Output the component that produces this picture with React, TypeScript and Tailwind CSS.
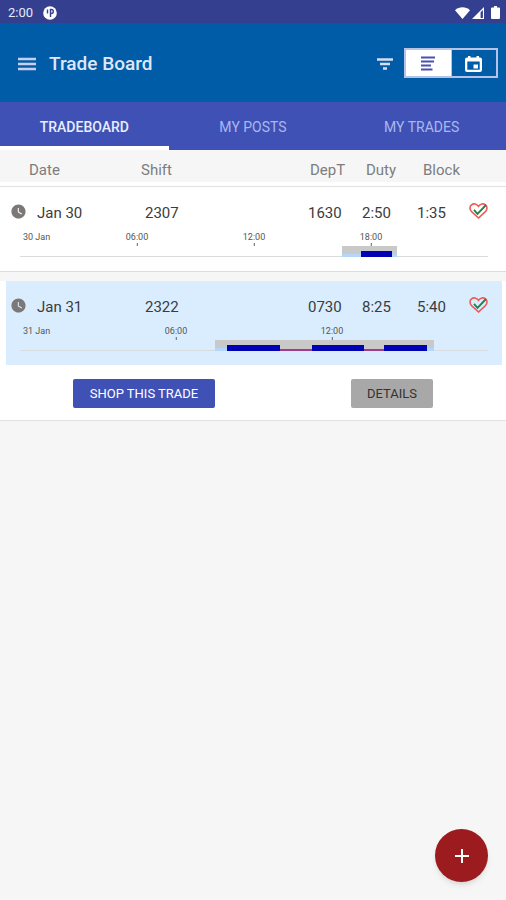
import { MdAdd, MdWatchLater } from "react-icons/md";

type Span = { from: number; to: number };

type Trade = {
  date: string;
  day: string;
  shift: string;
  dep: string;
  duty: string;
  block: string;
  hours: number;
  ticks: number[];
  dutySpan: Span;
  flights: Span[];
  selected?: boolean;
};

const trades: Trade[] = [
  {
    date: "Jan 30",
    day: "30 Jan",
    shift: "2307",
    dep: "1630",
    duty: "2:50",
    block: "1:35",
    hours: 24,
    ticks: [6, 12, 18],
    dutySpan: { from: 16.5, to: 19.33 },
    flights: [{ from: 17.5, to: 19.08 }],
  },
  {
    date: "Jan 31",
    day: "31 Jan",
    shift: "2322",
    dep: "0730",
    duty: "8:25",
    block: "5:40",
    hours: 18,
    ticks: [6, 12],
    dutySpan: { from: 7.5, to: 15.92 },
    flights: [
      { from: 7.97, to: 10 },
      { from: 11.24, to: 13.25 },
      { from: 14, to: 15.67 },
    ],
    selected: true,
  },
];

function StatusBar() {
  return (
    <div className="flex h-[23px] items-center bg-[#343f8f] pt-0.5 pr-1.5 pl-2 text-[#e8eafa]">
      <span className="text-[13px] leading-none">2:00</span>
      <svg className="ml-2.5 size-[14px]" viewBox="0 0 14 14" aria-hidden="true">
        <circle cx="7" cy="7" r="6.8" fill="#fff" />
        <path d="M4.5 3.5v4M7.5 11V3.5h.8a2 2 0 0 1 0 4h-.8" fill="none" stroke="#343f8f" strokeWidth="1.4" />
      </svg>
      <div className="ml-auto flex items-center gap-0.5">
        <svg className="h-3 w-[15px]" viewBox="0 0 15 12" aria-hidden="true">
          <path d="M0 3.2C4.2-.6 10.8-.6 15 3.2L7.5 12z" fill="#fff" />
        </svg>
        <svg className="h-3 w-[13px]" viewBox="0 0 13 12" aria-hidden="true">
          <path d="M0 12 12 0v12z" fill="#fff" />
          <path d="M8.6 5.2 10.9 3v8H8.6z" fill="#343f8f" />
        </svg>
        <svg className="ml-1 h-[13px] w-[9px]" viewBox="0 0 9 13" aria-hidden="true">
          <path d="M1 1.5h2V0h3v1.5h2a1 1 0 0 1 1 1V12a1 1 0 0 1-1 1H1a1 1 0 0 1-1-1V2.5a1 1 0 0 1 1-1z" fill="#fff" />
        </svg>
      </div>
    </div>
  );
}

function Toolbar() {
  return (
    <header className="flex h-[79px] items-center bg-[#005ca6] pr-2 pl-4 text-[#dfe6fa]">
      <button type="button" aria-label="Menu" className="pt-0.5 text-[#c9cdf0]">
        <svg className="h-[14px] w-[22px]" viewBox="0 0 22 14" aria-hidden="true">
          <path d="M2 2h18M2 7h18M2 12h18" stroke="currentColor" strokeWidth="2.6" />
        </svg>
      </button>
      <h1 className="ml-[11px] pt-0.5 text-[19px] leading-6 font-medium">Trade Board</h1>
      <button type="button" aria-label="Filter" className="mr-2.5 ml-auto pt-0.5 text-[#d5dcf5]">
        <svg className="h-3 w-[18px]" viewBox="0 0 18 12" aria-hidden="true">
          <path d="M1 1.5h16M4 6h10M7 10.500h4" stroke="currentColor" strokeWidth="2.4" />
        </svg>
      </button>
      <div className="flex h-[30px] w-[94px] border-2 border-[#b4c3e6]">
        <button type="button" aria-label="List view" className="flex flex-1 items-center justify-center bg-white pt-0.5">
          <svg className="h-[15px] w-4" viewBox="0 0 16 15" aria-hidden="true">
            <path d="M1 1.5h14M1 5.5h13M1 9.5h10M1 13.5h11.500" stroke="#4a50b0" strokeWidth="1.8" />
          </svg>
        </button>
        <button type="button" aria-label="Calendar view" className="flex flex-1 items-center justify-center border-l border-[#b4c3e6] pt-0.5 text-white">
          <svg className="h-4 w-[17px]" viewBox="0 0 17 16" fill="currentColor" aria-hidden="true">
            <path
              fillRule="evenodd"
              d="M3 0h2.500v1.500h6V0H14v1.500h1a2 2 0 0 1 2 2V14a2 2 0 0 1-2 2H2a2 2 0 0 1-2-2V3.500a2 2 0 0 1 2-2h1zM2.300 5.500v8.200h12.400V5.500z"
            />
            <path d="M8.500 8.500h4.500v4H8.500z" />
          </svg>
        </button>
      </div>
    </header>
  );
}

function Tabs() {
  return (
    <nav role="tablist" className="grid h-12 grid-cols-3 bg-[#3f51b5] text-sm text-[#a9b8f0]">
      <button type="button" role="tab" aria-selected="true" className="border-t-4 border-b-4 border-t-transparent border-b-white pt-0.5 font-medium text-[#e8ecff]">
        TRADEBOARD
      </button>
      <button type="button" role="tab" aria-selected="false" className="pt-0.5">
        MY POSTS
      </button>
      <button type="button" role="tab" aria-selected="false" className="pt-0.5">
        MY TRADES
      </button>
    </nav>
  );
}

function HeartCheck() {
  return (
    <svg className="h-4 w-[19px]" viewBox="0 0 19 16" fill="none" aria-hidden="true">
      <path
        d="M9.5 15 2.6 8.6C.4 6.4.6 3.2 2.5 1.8 4.7.2 7.8.8 9.500 3.400 11.2.8 14.3.2 16.5 1.8c1.9 1.4 2.1 4.6-.1 6.8z"
        stroke="#ee5a55"
        strokeWidth="1.6"
      />
      <path d="m5 6.8 3.500 4 8.500-8.800" stroke="#23804a" strokeWidth="1.8" />
    </svg>
  );
}

function Timeline({ trade }: { trade: Trade }) {
  const pct = (h: number) => `${(h / trade.hours) * 100}%`;
  const place = (s: Span) => ({ left: pct(s.from), width: pct(s.to - s.from) });
  const { dutySpan, flights } = trade;

  return (
    <div className="relative h-[26px] border-b border-[#d9dcdf] text-[9px] leading-3 text-[#555]">
      <span className="ml-[3px] block">{trade.day}</span>
      {trade.ticks.map((t) => (
        <div key={t} className="absolute top-0 flex -translate-x-1/2 flex-col items-center" style={{ left: pct(t) }}>
          <span>{String(t).padStart(2, "0")}:00</span>
          <span className="h-[3px] w-px bg-[#666]" />
        </div>
      ))}
      <div className="absolute -bottom-px h-[11px] border-b-[3px] border-[#b3d7fa] bg-[#c9c9c9]" style={place(dutySpan)} />
      <div
        className="absolute -bottom-px h-0.5 bg-[#a03c8c]"
        style={place({ from: flights[0].from, to: flights[flights.length - 1].to })}
      />
      {flights.slice(1).map((f, i) => (
        <div
          key={f.from}
          className="absolute bottom-px h-px bg-[#c9c9c9]"
          style={place({ from: flights[i].to, to: f.from })}
        />
      ))}
      {flights.map((f) => (
        <div key={f.from} className="absolute -bottom-px h-1.5 bg-[#0000b4]" style={place(f)} />
      ))}
    </div>
  );
}

function TradeRows({ trade }: { trade: Trade }) {
  const cell = trade.selected ? "bg-[#d9edff]" : "bg-white";
  return (
    <tbody className="text-[#3c3c3c]">
      <tr className={cell}>
        <td className="h-[50px] border-l-[6px] border-white pb-0.5 pl-1">
          <MdWatchLater className="size-[17px] text-[#7d7878]" />
        </td>
        <td className="pt-0.5">{trade.date}</td>
        <td className="pt-0.5 pl-1">{trade.shift}</td>
        <td className="pt-0.5">{trade.dep}</td>
        <td className="pt-0.5">{trade.duty}</td>
        <td className="pt-0.5">{trade.block}</td>
        <td className="border-r-4 border-white pb-0.5 pl-1">
          <HeartCheck />
        </td>
      </tr>
      <tr className={cell}>
        <td colSpan={7} className="h-[34px] border-r-4 border-l-[6px] border-white pr-3.5 pl-3.5 align-top">
          <div className="-mt-1.5">
            <Timeline trade={trade} />
          </div>
        </td>
      </tr>
    </tbody>
  );
}

export default function App() {
  return (
    <div className="min-h-screen bg-[#f6f6f6] font-[Roboto,sans-serif]">
      <StatusBar />
      <Toolbar />
      <Tabs />
      <main>
        <table className="w-full table-fixed border-separate border-spacing-0 text-left text-[15px] leading-5">
          <colgroup>
            <col className="w-[37px]" />
            <col className="w-[104px]" />
            <col />
            <col className="w-[54px]" />
            <col className="w-[55px]" />
            <col className="w-[48px]" />
            <col className="w-[41px]" />
          </colgroup>
          <thead className="text-[#7d7d7d]">
            <tr>
              <th colSpan={2} className="h-8 pt-2 pl-[29px] font-normal">Date</th>
              <th className="pt-2 font-normal">Shift</th>
              <th className="pt-2 pl-0.5 font-normal">DepT</th>
              <th className="pt-2 pl-1 font-normal">Duty</th>
              <th className="pt-2 pl-1.5 font-normal">Block</th>
              <td />
            </tr>
            <tr>
              <td colSpan={7} className="h-[5px] border-b border-[#e2e2e2] bg-white" />
            </tr>
          </thead>
          <TradeRows trade={trades[0]} />
          <tbody>
            <tr>
              <td colSpan={7} className="h-2.5 border-t border-[#dcdcdc]" />
            </tr>
          </tbody>
          <TradeRows trade={trades[1]} />
        </table>
        <div className="flex justify-between border-b border-[#e2e2e2] bg-white px-[73px] pt-3.5 pb-3 text-[13px]">
          <button type="button" className="h-[29px] w-[142px] rounded-[2px] bg-[#3f51b5] text-white">
            SHOP THIS TRADE
          </button>
          <button type="button" className="h-[29px] w-[82px] rounded-[2px] bg-[#a8a8a8] text-[#333]">
            DETAILS
          </button>
        </div>
      </main>
      <button
        type="button"
        aria-label="Add trade"
        className="fixed right-[18px] bottom-[18px] flex size-[53px] items-center justify-center rounded-full bg-[#9b1b1e] text-white shadow-md"
      >
        <MdAdd className="size-6" />
      </button>
    </div>
  );
}
